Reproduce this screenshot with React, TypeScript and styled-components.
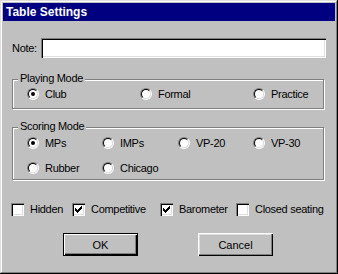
import React from 'react';
import styled, { createGlobalStyle } from 'styled-components';

const Global = createGlobalStyle`
  html, body { margin: 0; padding: 0; background: #c0c0c0; }
  body { font-family: "Liberation Sans", Arial, sans-serif; }
`;

const Window = styled.div`
  width: 338px;
  height: 274px;
  box-sizing: border-box;
  padding: 3px;
  background: #c0c0c0;
  box-shadow: inset -1px -1px 0 #000, inset 1px 1px 0 #dfdfdf,
    inset -2px -2px 0 #808080, inset 2px 2px 0 #fff;
  display: flex;
  flex-direction: column;
  font-family: "Liberation Sans", Arial, sans-serif;
  font-size: 11px;
  letter-spacing: -0.3px;
  color: #000;
`;

const TitleBar = styled.div`
  height: 18px;
  background: #000080;
  color: #fff;
  font-weight: bold;
  font-size: 12px;
  line-height: 18px;
  padding-left: 3px;
  letter-spacing: 0;
`;

const Body = styled.div`
  display: flex;
  flex-direction: column;
  align-items: flex-start;
  padding-left: 9px;
`;

const NoteRow = styled.div`
  display: flex;
  align-items: center;
  margin-top: 17px;
  height: 20px;
`;

const NoteLabel = styled.label`
  width: 29px;
  line-height: 13px;
`;

const TextField = styled.input`
  width: 285px;
  height: 20px;
  box-sizing: border-box;
  border: none;
  margin: 0;
  padding: 0 3px;
  background: #fff;
  box-shadow: inset 1px 1px 0 #808080, inset 2px 2px 0 #000,
    inset -1px -1px 0 #fff, inset -2px -2px 0 #dfdfdf;
  outline: none;
  font: inherit;
`;

const Group = styled.div<{ $mt: number; $pad: string }>`
  position: relative;
  width: 312px;
  box-sizing: border-box;
  border: 1px solid #808080;
  box-shadow: inset 1px 1px 0 #fff, 1px 1px 0 #fff;
  margin-top: ${(p) => p.$mt}px;
  padding: ${(p) => p.$pad};
`;

const Legend = styled.span`
  position: absolute;
  top: -8px;
  left: 5px;
  padding: 0 2px;
  background: #c0c0c0;
  line-height: 13px;
`;

const OptionGrid = styled.div<{ $cols: string; $rowGap?: number }>`
  display: grid;
  grid-template-columns: ${(p) => p.$cols};
  grid-auto-rows: 14px;
  row-gap: ${(p) => p.$rowGap ?? 0}px;
`;

const Option = styled.label`
  display: flex;
  align-items: center;
  gap: 6px;
  height: 14px;
  line-height: 13px;
  white-space: nowrap;
`;

const RadioOuter = styled.span`
  width: 12px;
  height: 12px;
  box-sizing: border-box;
  border-radius: 50%;
  border: 1px solid;
  border-color: #808080 #fff #fff #808080;
  display: flex;
  flex-shrink: 0;
`;

const RadioInner = styled.span<{ $checked: boolean }>`
  flex: 1;
  border-radius: 50%;
  border: 1px solid;
  border-color: #000 #dfdfdf #dfdfdf #000;
  background: #fff;
  display: flex;
  align-items: center;
  justify-content: center;
  &::after {
    content: '';
    width: 4px;
    height: 4px;
    border-radius: 50%;
    background: ${(p) => (p.$checked ? '#000' : 'transparent')};
  }
`;

const CheckRow = styled.div`
  display: grid;
  grid-template-columns: 61px 88px 76px 1fr;
  margin-top: 23px;
  margin-left: -1px;
  height: 13px;
  width: 320px;
`;

const CheckOption = styled.label`
  display: flex;
  align-items: center;
  gap: 6px;
  height: 13px;
  line-height: 13px;
  white-space: nowrap;
`;

const CheckBox = styled.span`
  width: 13px;
  height: 13px;
  box-sizing: border-box;
  background: #fff;
  box-shadow: inset 1px 1px 0 #808080, inset 2px 2px 0 #000,
    inset -1px -1px 0 #fff, inset -2px -2px 0 #dfdfdf;
  display: flex;
  align-items: center;
  justify-content: center;
  flex-shrink: 0;
`;

const ButtonRow = styled.div`
  display: flex;
  gap: 60px;
  margin-top: 17px;
  margin-left: 51px;
`;

const Button = styled.button<{ $default?: boolean }>`
  width: 75px;
  height: 23px;
  box-sizing: border-box;
  margin: 0;
  padding: 0;
  background: #c0c0c0;
  font: inherit;
  color: #000;
  border: ${(p) => (p.$default ? '1px solid #000' : 'none')};
  box-shadow: ${(p) =>
    p.$default
      ? 'inset 1px 1px 0 #fff, inset -1px -1px 0 #000, inset -2px -2px 0 #808080'
      : 'inset 1px 1px 0 #fff, inset -1px -1px 0 #000, inset -2px -2px 0 #808080, inset 2px 2px 0 #dfdfdf'};
`;

const Radio = ({ label, checked }: { label: string; checked?: boolean }) => (
  <Option>
    <RadioOuter>
      <RadioInner $checked={!!checked} />
    </RadioOuter>
    {label}
  </Option>
);

const Check = ({ label, checked }: { label: string; checked?: boolean }) => (
  <CheckOption>
    <CheckBox>
      {checked && (
        <svg width="7" height="7" viewBox="0 0 7 7" shapeRendering="crispEdges">
          <path d="M0 2 L2 4 L7 -1 L7 2 L2 7 L0 5 Z" fill="#000" />
        </svg>
      )}
    </CheckBox>
    {label}
  </CheckOption>
);

export default function App() {
  return (
    <>
      <Global />
      <Window>
        <TitleBar>Table Settings</TitleBar>
        <Body>
          <NoteRow>
            <NoteLabel>Note:</NoteLabel>
            <TextField type="text" defaultValue="" />
          </NoteRow>

          <Group $mt={21} $pad="7px 0 7px 14px">
            <Legend>Playing Mode</Legend>
            <OptionGrid $cols="113px 113px 1fr">
              <Radio label="Club" checked />
              <Radio label="Formal" />
              <Radio label="Practice" />
            </OptionGrid>
          </Group>

          <Group $mt={18} $pad="8px 0 4px 14px">
            <Legend>Scoring Mode</Legend>
            <OptionGrid $cols="75px 76px 75px 1fr" $rowGap={11}>
              <Radio label="MPs" checked />
              <Radio label="IMPs" />
              <Radio label="VP-20" />
              <Radio label="VP-30" />
              <Radio label="Rubber" />
              <Radio label="Chicago" />
            </OptionGrid>
          </Group>

          <CheckRow>
            <Check label="Hidden" />
            <Check label="Competitive" checked />
            <Check label="Barometer" checked />
            <Check label="Closed seating" />
          </CheckRow>

          <ButtonRow>
            <Button $default>OK</Button>
            <Button>Cancel</Button>
          </ButtonRow>
        </Body>
      </Window>
    </>
  );
}
